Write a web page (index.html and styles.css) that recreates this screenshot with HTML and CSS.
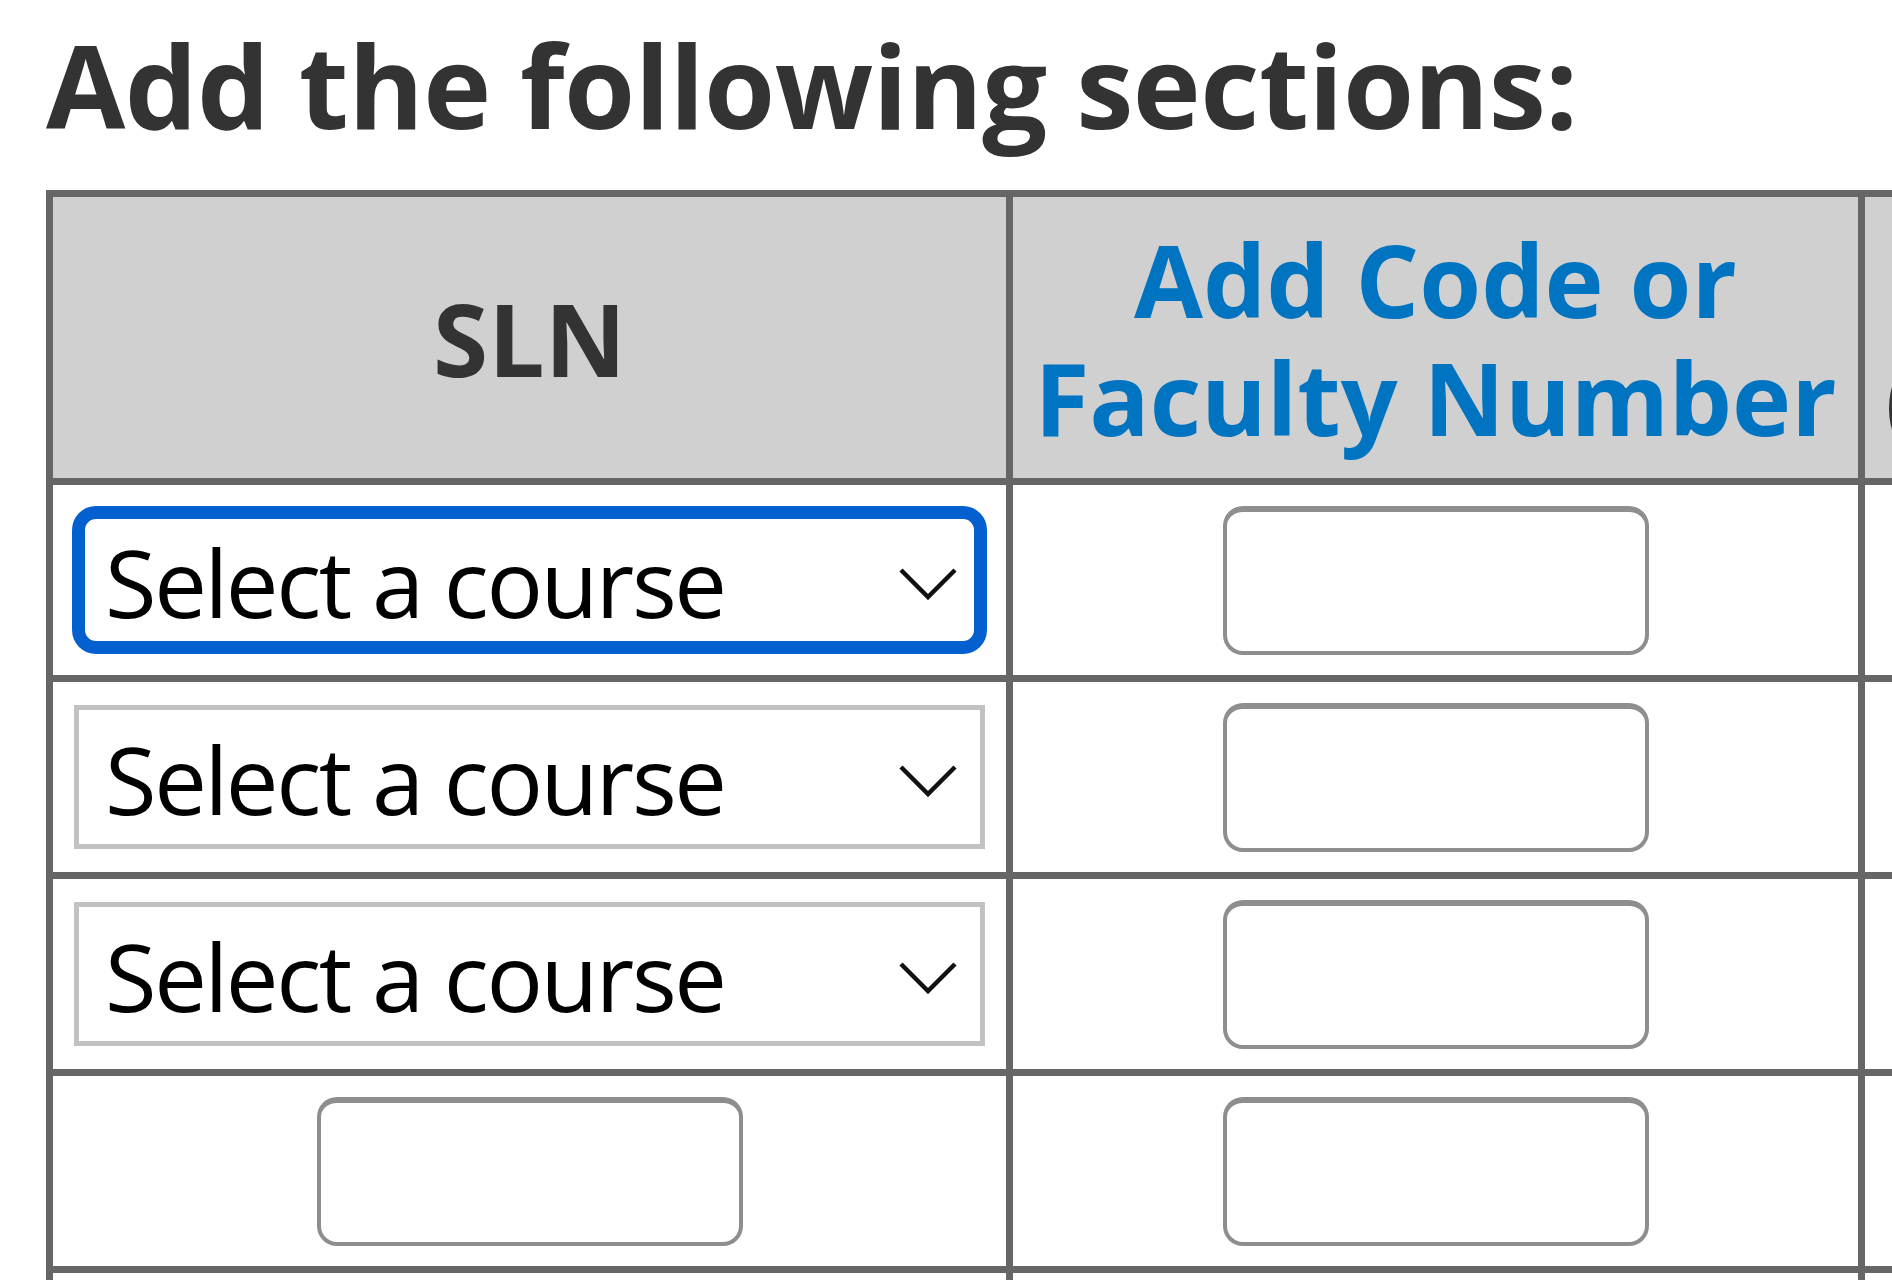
FILE: index.html
```html
<!DOCTYPE html>
<html lang="en">
<head>
<meta charset="utf-8">
<title>Add the following sections</title>
<link rel="stylesheet" href="styles.css">
</head>
<body>
<main class="page">
  <h1 class="title">Add the following sections:</h1>
  <div class="sections" role="table">
    <div class="cell cell--head" role="columnheader">SLN</div>
    <div class="cell cell--head" role="columnheader"><a class="head-link" href="#">Add Code or<br>Faculty Number</a></div>
    <div class="cell cell--head cell--head-extra" role="columnheader">Credits<br>(Variable Credits)</div>

    <div class="cell" role="cell">
      <div class="select select--focused" role="combobox" tabindex="0">
        <span class="select-text">Select a course</span>
        <svg class="chevron" width="58" height="32" viewBox="0 0 58 32" aria-hidden="true"><polyline points="2,2 29,29 56,2" fill="none" stroke="#111" stroke-width="4.5"/></svg>
      </div>
    </div>
    <div class="cell" role="cell"><input class="field" type="text" aria-label="Add code"></div>
    <div class="cell" role="cell"></div>

    <div class="cell" role="cell">
      <div class="select" role="combobox" tabindex="0">
        <span class="select-text">Select a course</span>
        <svg class="chevron" width="58" height="32" viewBox="0 0 58 32" aria-hidden="true"><polyline points="2,2 29,29 56,2" fill="none" stroke="#111" stroke-width="4.5"/></svg>
      </div>
    </div>
    <div class="cell" role="cell"><input class="field" type="text" aria-label="Add code"></div>
    <div class="cell" role="cell"></div>

    <div class="cell" role="cell">
      <div class="select" role="combobox" tabindex="0">
        <span class="select-text">Select a course</span>
        <svg class="chevron" width="58" height="32" viewBox="0 0 58 32" aria-hidden="true"><polyline points="2,2 29,29 56,2" fill="none" stroke="#111" stroke-width="4.5"/></svg>
      </div>
    </div>
    <div class="cell" role="cell"><input class="field" type="text" aria-label="Add code"></div>
    <div class="cell" role="cell"></div>

    <div class="cell" role="cell"><input class="field" type="text" aria-label="SLN"></div>
    <div class="cell" role="cell"><input class="field" type="text" aria-label="Add code"></div>
    <div class="cell" role="cell"></div>

    <div class="cell" role="cell"><input class="field" type="text" aria-label="SLN"></div>
    <div class="cell" role="cell"><input class="field" type="text" aria-label="Add code"></div>
    <div class="cell" role="cell"></div>
  </div>
</main>
</body>
</html>
```
FILE: styles.css
```css
html, body {
  margin: 0;
  height: 100%;
  overflow: hidden;
  background: #fff;
}

body {
  font-family: "Open Sans", "Liberation Sans", sans-serif;
}

.page {
  padding: 16px 0 0 46px;
}

.title {
  margin: 0 0 36px;
  font-size: 115px;
  line-height: 138px;
  font-weight: 700;
  letter-spacing: -0.5px;
  color: #333;
  white-space: nowrap;
}

.sections {
  display: grid;
  grid-template-columns: 953px 845px max-content;
  grid-template-rows: 281px;
  grid-auto-rows: 190px;
  gap: 7px;
  width: max-content;
  border: 7px solid #666;
  background: #666;
}

.cell {
  display: flex;
  align-items: center;
  justify-content: center;
  padding: 0 21px;
  background: #fff;
}

.cell--head {
  padding: 0 24px;
  background: #d0d0d0;
  font-size: 100px;
  line-height: 118px;
  font-weight: 700;
  color: #333;
  text-align: center;
  white-space: nowrap;
}

.cell--head-extra {
  padding: 0 20px;
}

.head-link {
  color: #0074c1;
  text-decoration: none;
}

.select {
  box-sizing: border-box;
  display: flex;
  align-items: center;
  justify-content: space-between;
  width: 911px;
  height: 144px;
  padding: 0 23px 0 26px;
  border: 5px solid #c2c2c2;
  background: #fff;
  font-size: 94px;
  letter-spacing: -2.4px;
  color: #000;
  white-space: nowrap;
}

.select--focused {
  border: 11px solid #0560cf;
  border-radius: 22px;
  box-shadow: 0 0 0 2px #0560cf;
  padding: 0 17px 0 20px;
}

.select-text {
  line-height: 1;
  margin-top: 4px;
}

.chevron {
  flex: none;
  margin-top: 8px;
}

.field {
  box-sizing: border-box;
  width: 426px;
  height: 149px;
  margin: 0;
  padding: 0 20px;
  border: 4px solid #8e8e8e;
  border-top-width: 6px;
  border-radius: 20px;
  background: #fff;
  font: inherit;
  font-size: 60px;
  outline: none;
}
```
